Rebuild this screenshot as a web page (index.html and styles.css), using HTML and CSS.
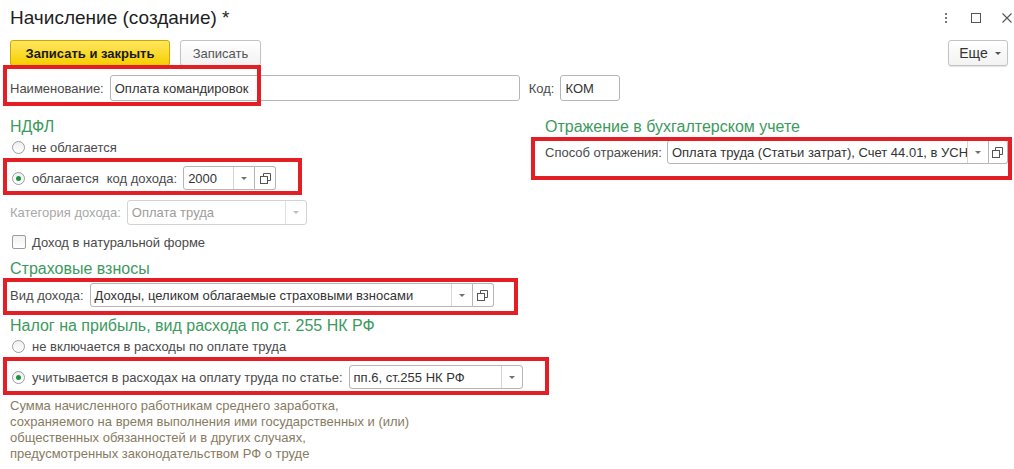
FILE: index.html
```html
<!DOCTYPE html>
<html lang="ru">
<head>
<meta charset="utf-8">
<title>Начисление (создание)</title>
<link rel="stylesheet" href="styles.css">
</head>
<body>
<div class="form">
  <div class="titlebar">
    <h1 class="title">Начисление (создание) *</h1>
    <div class="win-controls">
      <span class="wc-dots"><i></i><i></i><i></i></span>
      <span class="wc-max"></span>
      <svg class="wc-close" width="10" height="10" viewBox="0 0 10 10"><path d="M0.5 0.5L9.5 9.5M9.5 0.5L0.5 9.5" stroke="#555" stroke-width="1.1" fill="none"/></svg>
    </div>
  </div>

  <div class="toolbar">
    <button class="btn btn-primary">Записать и закрыть</button>
    <button class="btn btn-plain">Записать</button>
    <span class="spacer"></span>
    <button class="btn btn-more">Еще <i class="tri tri-dark"></i></button>
  </div>

  <div class="row row-name">
    <span class="lbl">Наименование:</span>
    <div class="field w-name"><span class="val">Оплата командировок</span></div>
    <span class="lbl lbl-code">Код:</span>
    <div class="field w-code"><span class="val">КОМ</span></div>
  </div>

  <div class="columns">
    <div class="col-left">
      <div class="group-title">НДФЛ</div>
      <div class="row opt-row">
        <span class="radio"></span><span class="opt-text">не облагается</span>
      </div>
      <div class="row opt-row field-row r-taxed">
        <span class="radio on"></span><span class="opt-text">облагается</span>
        <span class="lbl lbl-kod">код дохода:</span>
        <div class="combo">
          <div class="field has-dd has-open w-kod"><span class="val">2000</span><span class="dd"><i class="tri"></i></span></div>
          <span class="open-btn"><svg width="11" height="11" viewBox="0 0 11 11"><path d="M3.5 3.5V0.5h7v7h-3" fill="none" stroke="#555"/><rect x="0.5" y="3.5" width="7" height="7" fill="none" stroke="#555"/></svg></span>
        </div>
      </div>
      <div class="row field-row r-cat disabled">
        <span class="lbl">Категория дохода:</span>
        <div class="field has-dd w-cat"><span class="val">Оплата труда</span><span class="dd"><i class="tri"></i></span></div>
      </div>
      <div class="row opt-row r-check">
        <span class="check"></span><span class="opt-text">Доход в натуральной форме</span>
      </div>

      <div class="group-title gt-ins">Страховые взносы</div>
      <div class="row field-row r-vid">
        <span class="lbl">Вид дохода:</span>
        <div class="combo">
          <div class="field has-dd has-open w-vid"><span class="val">Доходы, целиком облагаемые страховыми взносами</span><span class="dd"><i class="tri"></i></span></div>
          <span class="open-btn"><svg width="11" height="11" viewBox="0 0 11 11"><path d="M3.5 3.5V0.5h7v7h-3" fill="none" stroke="#555"/><rect x="0.5" y="3.5" width="7" height="7" fill="none" stroke="#555"/></svg></span>
        </div>
      </div>

      <div class="group-title gt-profit">Налог на прибыль, вид расхода по ст. 255 НК РФ</div>
      <div class="row opt-row">
        <span class="radio"></span><span class="opt-text">не включается в расходы по оплате труда</span>
      </div>
      <div class="row opt-row field-row r-art">
        <span class="radio on"></span><span class="opt-text">учитывается в расходах на оплату труда по статье:</span>
        <div class="field has-dd w-art"><span class="val">пп.6, ст.255 НК РФ</span><span class="dd"><i class="tri"></i></span></div>
      </div>
      <p class="note">Сумма начисленного работникам среднего заработка,<br>сохраняемого на время выполнения ими государственных и (или)<br>общественных обязанностей и в других случаях,<br>предусмотренных законодательством РФ о труде</p>
    </div>

    <div class="col-right">
      <div class="group-title">Отражение в бухгалтерском учете</div>
      <div class="row field-row r-sposob">
        <span class="lbl">Способ отражения:</span>
        <div class="combo">
          <div class="field has-dd has-open w-sposob"><span class="val">Оплата труда (Статьи затрат), Счет 44.01, в УСН</span><span class="dd"><i class="tri"></i></span></div>
          <span class="open-btn"><svg width="11" height="11" viewBox="0 0 11 11"><path d="M3.5 3.5V0.5h7v7h-3" fill="none" stroke="#555"/><rect x="0.5" y="3.5" width="7" height="7" fill="none" stroke="#555"/></svg></span>
        </div>
      </div>
    </div>
  </div>

  <div class="annot a-name"></div>
  <div class="annot a-taxed"></div>
  <div class="annot a-sposob"></div>
  <div class="annot a-vid"></div>
  <div class="annot a-art"></div>
</div>
</body>
</html>
```

FILE: styles.css
```css
* { box-sizing: border-box; }
html, body { margin: 0; padding: 0; background: #fff; }
body {
  font-family: "Liberation Sans", Arial, sans-serif;
  font-size: 13px;
  color: #4a4a4a;
}
.form {
  position: relative;
  width: 1014px;
  height: 469px;
  overflow: hidden;
  padding: 0 9px 0 10px;
}

/* title bar */
.titlebar { display: flex; align-items: center; height: 36px; }
.title {
  flex: 1;
  margin: 0;
  font-size: 19px;
  font-weight: normal;
  color: #1e1e1e;
  line-height: 36px;
}
.win-controls { display: flex; align-items: center; margin-right: -7px; }
.wc-dots { display: flex; flex-direction: column; gap: 2px; width: 3px; margin-right: 23px; }
.wc-dots i { display: block; width: 2px; height: 2px; background: #777; }
.wc-max { width: 10px; height: 10px; border: 1px solid #555; margin-right: 21px; }
.wc-close { display: block; }

/* toolbar */
.toolbar { display: flex; align-items: center; margin-top: 4px; height: 26px; }
.spacer { flex: 1; }
.btn {
  font-family: inherit;
  font-size: 13px;
  height: 26px;
  border: 1px solid #c3c3c3;
  border-radius: 3px;
  background: linear-gradient(#ffffff, #f2f2f2);
  box-shadow: 0 1px 1px rgba(0,0,0,0.12);
  color: #444;
  padding: 0;
  margin: 0;
  white-space: nowrap;
}
.btn-primary {
  width: 160px;
  font-weight: bold;
  color: #1a1a1a;
  border-color: #c9a800;
  background: linear-gradient(#ffe760, #f6cf00);
}
.btn-plain { width: 81px; margin-left: 10px; color: #555; }
.btn-more {
  width: 60px;
  margin-right: -3px;
  display: flex;
  align-items: center;
  justify-content: center;
  gap: 7px;
  color: #333;
  font-size: 14px;
  padding: 0 0 0 4px;
}

/* generic rows & fields */
.row { display: flex; align-items: center; }
.lbl { white-space: nowrap; color: #4a4a4a; }
.field {
  display: flex;
  align-items: center;
  height: 24px;
  border: 1px solid #b5b5b5;
  border-radius: 3px;
  background: #fff;
  color: #333;
  overflow: hidden;
}
.val { flex: 1; padding-left: 4px; white-space: nowrap; overflow: hidden; }
.dd {
  width: 21px;
  height: 100%;
  border-left: 1px solid #d6d6d6;
  display: flex;
  align-items: center;
  justify-content: center;
}
.tri {
  display: block;
  width: 0;
  height: 0;
  border-left: 3px solid transparent;
  border-right: 3px solid transparent;
  border-top: 3px solid #707070;
}
.tri-dark { border-top-color: #555; }
.combo { display: flex; flex: none; }
.field.has-open { border-radius: 3px 0 0 3px; }
.open-btn {
  width: 21px;
  height: 24px;
  border: 1px solid #b5b5b5;
  border-left: none;
  border-radius: 0 3px 3px 0;
  display: flex;
  align-items: center;
  justify-content: center;
  background: #fff;
}

.row-name { margin-top: 9px; height: 26px; }
.row-name .field { height: 26px; }
.row-name .lbl { margin-right: 6px; }
.w-name { width: 410px; }
.lbl-code { margin-left: 9px; margin-right: 6px; }
.w-code { width: 60px; }

.columns { display: flex; margin-top: 16px; }
.col-left { flex: none; width: 535px; display: flex; flex-direction: column; }
.col-right { flex: 1; min-width: 0; display: flex; flex-direction: column; }

.group-title {
  font-size: 16px;
  line-height: 20px;
  height: 20px;
  color: #3c9a5d;
}
.opt-row { height: 21px; }
.radio {
  position: relative;
  width: 13px;
  height: 13px;
  margin-left: 2px;
  margin-right: 7px;
  border: 1px solid #9c9c9c;
  border-radius: 50%;
  background: linear-gradient(#efefef, #ffffff);
  flex: none;
}
.radio.on::after {
  content: "";
  position: absolute;
  left: 3px;
  top: 3px;
  width: 5px;
  height: 5px;
  border-radius: 50%;
  background: #1f9146;
}
.check {
  width: 14px;
  height: 14px;
  margin-left: 2px;
  margin-right: 6px;
  border: 1px solid #9c9c9c;
  border-radius: 2px;
  background: linear-gradient(#f2f2f2, #ffffff);
  flex: none;
}
.opt-text { white-space: nowrap; color: #4a4a4a; }

.r-taxed { margin-top: 8px; height: 24px; }
.lbl-kod { margin-left: 8px; margin-right: 6px; }
.w-kod { width: 72px; }

.r-cat { margin-top: 10px; height: 25px; }
.r-cat .lbl { margin-right: 6px; color: #a8a8a8; }
.w-cat { width: 180px; height: 25px; border-color: #d3d3d3; }
.r-cat .val { color: #9c9c9c; }
.r-cat .dd { border-left-color: #e2e2e2; }
.r-cat .tri { border-top-color: #bdbdbd; }

.r-check { margin-top: 7px; height: 20px; }

.gt-ins { margin-top: 7px; }
.r-vid { margin-top: 4px; height: 24px; }
.r-vid .lbl { margin-right: 6px; }
.w-vid { width: 383px; }

.gt-profit { margin-top: 9px; }
.r-art { margin-top: 8px; height: 24px; }
.r-art .opt-text { margin-right: 6px; }
.w-art { width: 174px; }

.note {
  margin: 9px 0 0;
  line-height: 16px;
  color: #877b63;
}

.r-sposob { margin-top: 3px; height: 24px; }
.r-sposob .lbl { margin-right: 5px; }
.w-sposob { width: 322px; }
.r-sposob .open-btn { width: 19px; }

/* red annotation frames drawn over the form */
.annot {
  position: absolute;
  border: 4px solid #e31e25;
  pointer-events: none;
}
.a-name { left: 3px; top: 65px; width: 258px; height: 41px; }
.a-taxed { left: 3px; top: 158px; width: 299px; height: 37px; }
.a-sposob { left: 531px; top: 137px; width: 481px; height: 43px; }
.a-vid { left: 3px; top: 278px; width: 515px; height: 37px; }
.a-art { left: 3px; top: 357px; width: 546px; height: 38px; }
```
